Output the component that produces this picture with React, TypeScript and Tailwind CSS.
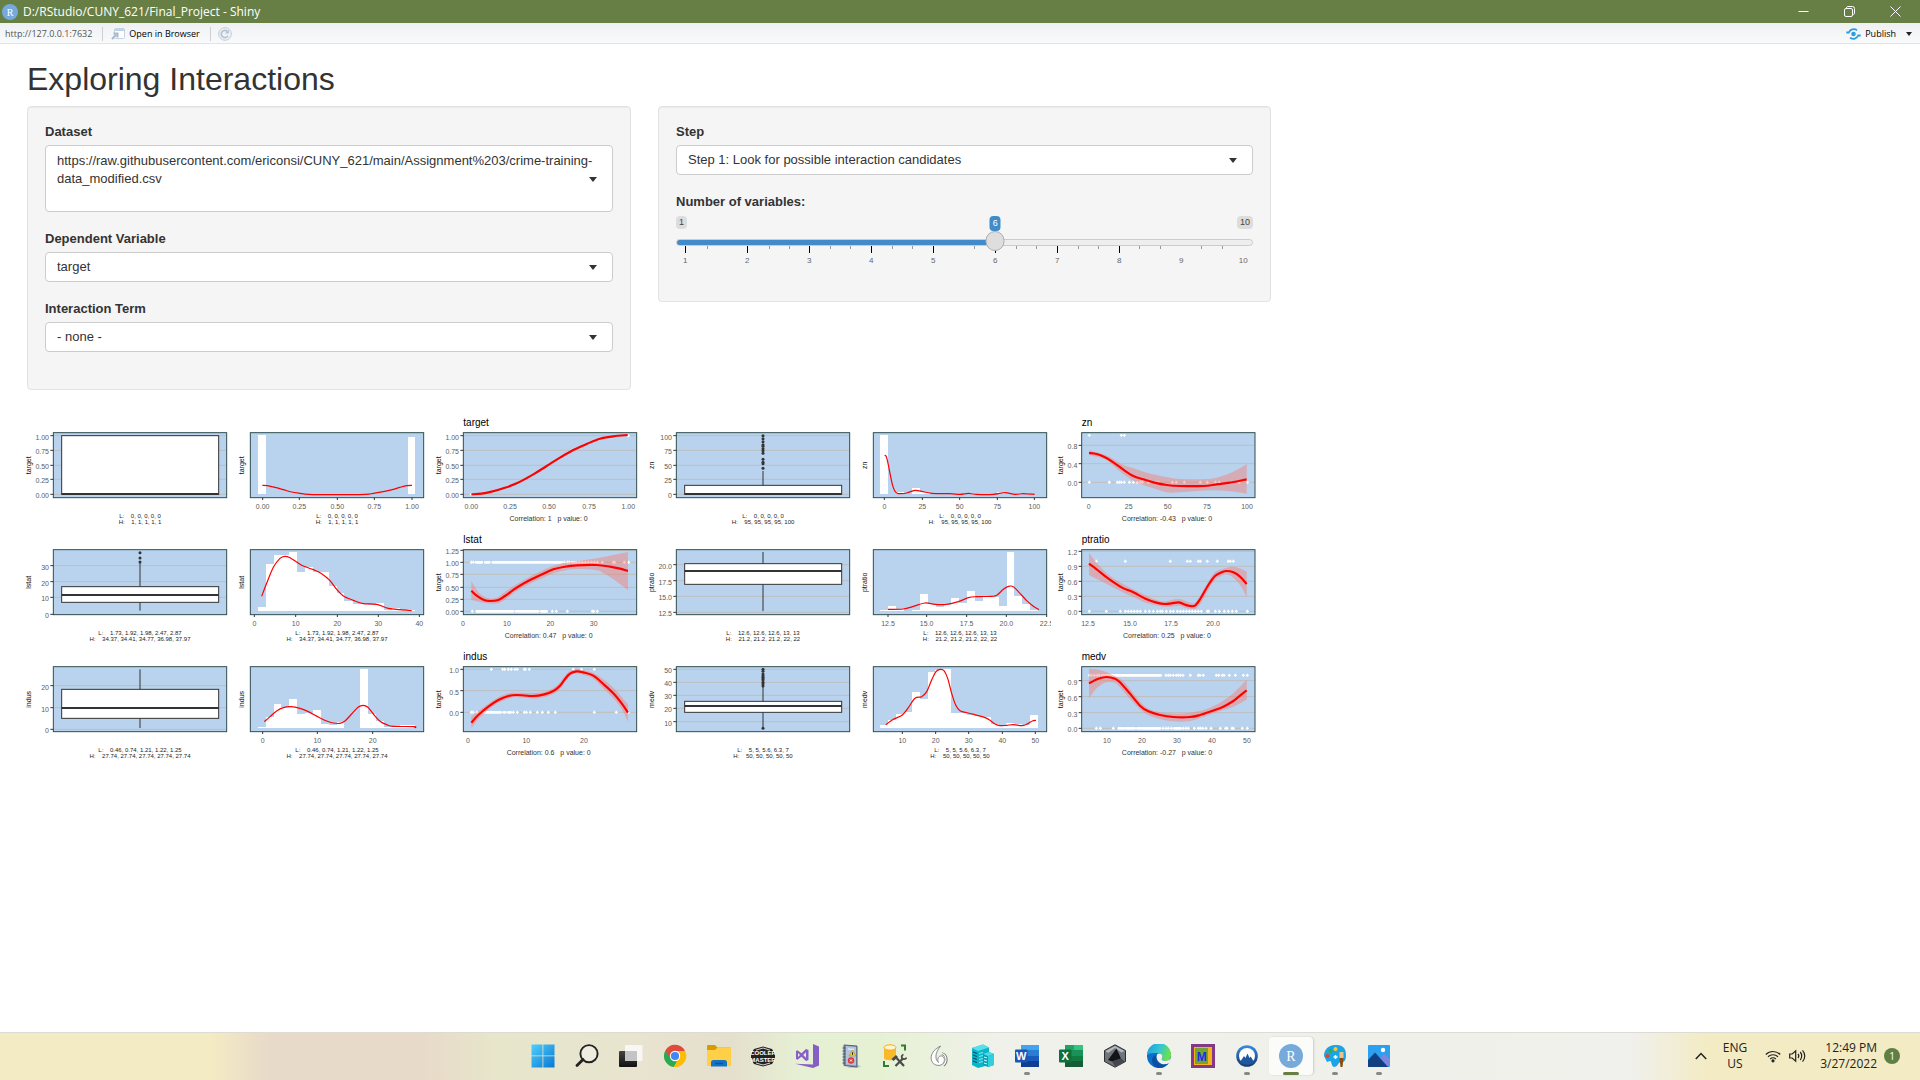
import { useState, type ReactNode } from 'react'

/* ---------- plots: every drawing unit is a third of a pixel ---------- */

type Tick = [number, string]
type Pt = [number, number]

const pts = (s: string): Pt[] =>
  s.split(' ').map((p) => p.split(',').map(Number) as Pt)

function smooth(p: Pt[], start = 'M') {
  let d = `${start}${p[0][0]},${p[0][1]}`
  for (let i = 0; i < p.length - 1; i++) {
    const a = p[i - 1] || p[i]
    const b = p[i]
    const c = p[i + 1]
    const e = p[i + 2] || c
    d += `C${b[0] + (c[0] - a[0]) / 6},${b[1] + (c[1] - a[1]) / 6} ${c[0] - (e[0] - b[0]) / 6},${c[1] - (e[1] - b[1]) / 6} ${c[0]},${c[1]}`
  }
  return d
}

const FONT = '"Liberation Sans", Arial, sans-serif'

type FrameProps = {
  row: number
  x0: number
  width: number
  left: number
  name: string
  nameX: number
  title?: string
  caption: string[]
  yTicks?: Tick[]
  xTicks?: Tick[]
  marks?: boolean
  children: ReactNode
}

function Frame({ row, x0, width, left, name, nameX, title, caption, yTicks = [], xTicks = [], marks, children }: FrameProps) {
  const top = 83 + row * 351
  const right = left + 520
  const bottom = top + 195
  const mid = left + 260
  return (
    <svg width={width} height={117} viewBox={`${x0} ${21 + row * 351} ${width * 3} 351`} className="block shrink-0" fontFamily={FONT} role="img" aria-label={`${name} plot`}>
      <rect x={left} y={top} width={520} height={195} fill="#b9d3ee" />
      {yTicks.map(([y]) => (
        <path key={y} d={`M${left} ${y}H${right}`} stroke="#bebebe" strokeWidth="3" />
      ))}
      {children}
      <rect x={left} y={top} width={520} height={195} fill="none" stroke="#2f4f4f" strokeWidth="3" />
      {yTicks.map(([y, t]) => (
        <g key={t}>
          <path d={`M${left - 9} ${y}H${left}`} stroke="#333" strokeWidth="3" />
          <text x={left - 13} y={y + 12} fontSize="21" textAnchor="end" fill="#5c5c5c">{t}</text>
        </g>
      ))}
      {xTicks.map(([x, t]) => (
        <g key={t}>
          {marks && <path d={`M${x} ${bottom}V${bottom + 7}`} stroke="#333" strokeWidth="3" />}
          <text x={x} y={bottom + 34} fontSize="21" textAnchor="middle" fill="#5c5c5c">{t}</text>
        </g>
      ))}
      <text transform={`translate(${nameX + 6} ${top + 98}) rotate(-90)`} fontSize="21" textAnchor="middle" fill="#111">{name}</text>
      {title && <text x={left} y={top - 19} fontSize="30" fill="#000">{title}</text>}
      {caption.length === 1 ? (
        <text x={mid - 4} y={top + 265} fontSize="21" textAnchor="middle" fill="#333" className="whitespace-pre">{caption[0]}</text>
      ) : (
        caption.map((c, i) => (
          <text key={i} x={mid} y={top + 256 + i * 19} fontSize="18" textAnchor="middle" fill="#222" className="whitespace-pre">{c}</text>
        ))
      )}
    </svg>
  )
}

type Box = { ticks: Tick[]; q: [number, number, number]; lo: number; hi: number; out?: number[] }

function BoxPlot({ b, left, ...f }: { b: Box } & Omit<FrameProps, 'children'>) {
  const cx = left + 260
  return (
    <Frame {...f} left={left} yTicks={b.ticks}>
      <path d={`M${cx} ${b.hi}V${b.lo}`} stroke="#333" strokeWidth="3" />
      <rect x={left + 25} y={b.q[0]} width={471} height={b.q[2] - b.q[0]} fill="#fff" stroke="#333" strokeWidth="3" />
      <path d={`M${left + 25} ${b.q[1]}h471`} stroke="#333" strokeWidth="6" />
      {b.out?.map((y) => <circle key={y} cx={cx} cy={y} r="4.5" fill="#333" />)}
    </Frame>
  )
}

type Hist = { base: number; bars: [number, number, number][]; line: string; ticks: Tick[] }

function Histogram({ h, ...f }: { h: Hist } & Omit<FrameProps, 'children'>) {
  return (
    <Frame {...f} xTicks={h.ticks} marks>
      {h.bars.map(([a, b, y]) => (
        <rect key={a} x={a} y={y} width={b - a} height={h.base - y} fill="#fff" shapeRendering="crispEdges" />
      ))}
      <path d={smooth(pts(h.line))} fill="none" stroke="#f00" strokeWidth="3.6" />
    </Frame>
  )
}

type Scatter = { y: Tick[]; x: Tick[]; line: string; up?: string; down?: string; dots: [number, number[]][]; runs?: [number, number, number][] }

function Fit({ s, ...f }: { s: Scatter } & Omit<FrameProps, 'children'>) {
  return (
    <Frame {...f} yTicks={s.y} xTicks={s.x}>
      {s.runs?.map(([y, a, b]) => <path key={`${y}-${a}`} d={`M${a} ${y}H${b}`} stroke="#fff" strokeWidth="8" strokeLinecap="round" />)}
      {s.dots.map(([y, xs]) => xs.map((x) => <path key={`${y}-${x}`} d={`M${x - 4.5} ${y}h9M${x} ${y - 4.5}v9`} stroke="#fff" strokeWidth="4" />))}
      {s.up && s.down && <path d={`${smooth(pts(s.up))}${smooth(pts(s.down), 'L')}Z`} fill="#ff7060" fillOpacity="0.4" />}
      <path d={smooth(pts(s.line))} fill="none" stroke="#f00" strokeWidth="6.5" />
    </Frame>
  )
}

const unitTicks: Tick[] = [[92, '1.00'], [136, '0.75'], [181, '0.50'], [223, '0.25'], [268, '0.00']]

const boxA: Box[] = [
  { ticks: unitTicks, q: [92, 267, 268], lo: 268, hi: 92 },
  { ticks: [[482, '30'], [530, '20'], [577, '10'], [628, '0']], q: [545, 570, 592], lo: 617, hi: 471, out: [443, 459, 471] },
  { ticks: [[842, '20'], [908, '10'], [973, '0']], q: [853, 909, 940], lo: 969, hi: 793 },
]

const boxB: Box[] = [
  { ticks: [[92, '100'], [136, '75'], [181, '50'], [223, '25'], [268, '0']], q: [241, 267, 268], lo: 268, hi: 198, out: [92, 101, 110, 119, 124, 131, 137, 145, 163, 172, 176, 190] },
  { ticks: [[479, '20.0'], [527, '17.5'], [574, '15.0'], [622, '12.5']], q: [476, 498, 538], lo: 618, hi: 441 },
  { ticks: [[793, '50'], [832, '40'], [871, '30'], [910, '20'], [950, '10']], q: [889, 903, 922], lo: 970, hi: 845, out: [793, 799, 807, 812, 817, 821, 825, 832, 837, 843, 970] },
]

const histA: Hist[] = [
  {
    base: 267,
    bars: [[774, 798, 90], [1224, 1245, 96]],
    line: '787,241 802,242 825,247 850,254 875,261 900,265 925,268 1000,269 1095,268 1120,265 1150,260 1180,253 1200,247 1220,242 1236,241',
    ticks: [[788, '0.00'], [898, '0.25'], [1012, '0.50'], [1123, '0.75'], [1236, '1.00']],
  },
  {
    base: 618,
    bars: [[774, 798, 606], [798, 822, 477], [822, 867, 450], [867, 891, 441], [891, 915, 501], [915, 939, 486], [939, 987, 501], [987, 1012, 543], [1012, 1032, 563], [1032, 1060, 587], [1060, 1104, 596], [1104, 1128, 600], [1128, 1152, 594], [1152, 1176, 614], [1176, 1200, 609], [1200, 1245, 614]],
    line: '785,574 800,535 820,487 840,460 855,454 870,458 890,471 910,483 940,494 965,506 990,527 1010,553 1030,573 1060,586 1090,596 1130,598 1165,610 1200,614 1235,617',
    ticks: [[763, '0'], [887, '10'], [1012, '20'], [1135, '30'], [1258, '40']],
  },
  {
    base: 969,
    bars: [[774, 798, 966], [798, 822, 936], [822, 843, 897], [843, 867, 906], [867, 891, 882], [891, 915, 927], [915, 939, 924], [939, 963, 915], [963, 987, 957], [987, 1011, 960], [1011, 1032, 951], [1080, 1104, 792], [1104, 1128, 927], [1128, 1152, 948], [1152, 1200, 966], [1200, 1245, 960]],
    line: '793,950 810,935 830,918 850,908 873,905 900,910 925,920 955,936 980,948 1000,954 1020,955 1035,948 1055,927 1075,906 1089,901 1103,906 1120,927 1140,949 1160,959 1180,964 1243,965 1243,969',
    ticks: [[788, '0'], [952, '10'], [1118, '20']],
  },
]

const histB: Hist[] = [
  {
    base: 267,
    bars: [[60, 84, 90], [108, 132, 262], [156, 180, 249], [180, 205, 261], [205, 228, 264], [312, 340, 264], [412, 436, 261], [480, 510, 264]],
    line: '74,151 79,155 84,175 90,205 97,238 104,257 112,265 125,266 140,264 165,256 185,259 215,265 270,266 300,268 325,265 350,268 400,268 435,263 465,268 490,266 524,268',
    ticks: [[73, '0'], [187, '25'], [299, '50'], [412, '75'], [523, '100']],
  },
  {
    base: 618,
    bars: [[60, 84, 614], [84, 108, 603], [108, 132, 612], [156, 180, 614], [180, 204, 567], [204, 228, 597], [228, 252, 606], [252, 273, 600], [273, 297, 579], [297, 321, 594], [321, 345, 558], [345, 369, 588], [369, 417, 576], [417, 441, 603], [441, 462, 441], [462, 486, 573], [486, 510, 597], [510, 534, 614]],
    line: '84,613 130,612 160,604 195,594 225,598 260,598 295,590 325,578 350,575 395,574 410,571 430,553 445,544 460,545 480,565 500,587 520,604 537,614',
    ticks: [[84, '12.5'], [200, '15.0'], [320, '17.5'], [439, '20.0'], [560, '22.5']],
  },
  {
    base: 969,
    bars: [[60, 84, 960], [84, 108, 945], [108, 132, 927], [132, 156, 921], [156, 180, 861], [180, 204, 882], [204, 225, 801], [225, 249, 795], [249, 273, 792], [273, 321, 924], [321, 345, 929], [345, 369, 932], [369, 393, 936], [393, 417, 958], [417, 437, 962], [437, 462, 954], [462, 486, 957], [486, 510, 960], [510, 534, 930]],
    line: '77,959 100,943 127,930 145,908 165,880 185,875 200,860 215,825 228,800 240,793 252,797 263,820 275,865 287,900 300,917 325,924 355,932 375,938 390,946 405,957 420,962 440,961 460,959 487,962 505,955 517,948 528,946',
    ticks: [[127, '10'], [227, '20'], [326, '30'], [427, '40'], [526, '50']],
  },
]

const fitA: Scatter[] = [
  {
    y: unitTicks,
    x: [[124, '0.00'], [240, '0.25'], [357, '0.50'], [477, '0.75'], [595, '1.00']],
    line: '124,268 155,266 185,260 220,250 260,235 310,208 350,183 390,158 430,135 470,117 510,101 550,94 593,90',
    dots: [[268, [124]], [92, [595]]],
  },
  {
    y: [[436, '1.25'], [472, '1.00'], [508, '0.75'], [547, '0.50'], [583, '0.25'], [619, '0.00']],
    x: [[99, '0'], [231, '10'], [361, '20'], [491, '30']],
    line: '124,557 140,572 160,584 180,588 205,585 225,573 260,548 300,525 340,506 370,493 400,486 440,481 500,480 540,485 570,491 594,498',
    up: '124,527 145,561 165,576 185,581 205,576 225,561 260,538 300,515 340,495 370,483 400,474 450,467 500,460 550,450 594,441',
    down: '594,555 570,537 540,516 520,505 500,496 440,492 400,497 370,505 340,518 300,536 260,558 225,584 205,595 185,596 165,594 145,590 124,584',
    dots: [[472, [124, 130, 403, 412, 418, 448, 457, 466, 475, 484, 493, 502, 517, 550, 554, 583, 596]], [619, [127, 367, 379, 412, 487, 491, 502]]],
    runs: [[472, 138, 156], [472, 166, 178], [472, 188, 395], [472, 426, 440], [619, 140, 250], [619, 258, 325], [619, 334, 350]],
  },
  {
    y: [[793, '1.0'], [857, '0.5'], [922, '0.0']],
    x: [[114, '0'], [289, '10'], [462, '20']],
    line: '124,953 145,930 175,905 205,885 235,873 260,870 310,873 340,869 370,858 390,842 405,822 420,806 440,799 460,802 490,812 520,837 550,865 575,895 594,923',
    up: '124,935 145,918 175,896 205,877 235,865 260,863 310,864 340,862 370,849 390,832 405,812 420,798 440,793 460,795 490,804 520,823 550,848 575,876 594,899',
    down: '594,950 575,912 550,880 520,850 490,821 460,810 440,805 420,814 405,832 390,852 370,867 340,877 310,881 260,877 235,881 205,893 175,914 145,942 124,970',
    dots: [[793, [184, 218, 224, 235, 244, 255, 262, 283, 286, 298, 430, 454, 493]], [922, [124, 129, 141, 154, 163, 250, 262, 283, 289, 301, 322, 337, 355, 376, 493, 559, 595]]],
    runs: [[922, 168, 212], [922, 221, 226], [922, 235, 242]],
  },
]

const fitB: Scatter[] = [
  {
    y: [[121, '0.8'], [176, '0.4'], [232, '0.0']],
    x: [[686, '0'], [806, '25'], [923, '50'], [1041, '75'], [1161, '100']],
    line: '687,144 710,147 735,157 760,172 790,194 820,213 850,223 880,232 920,240 960,243 1030,243 1070,238 1110,233 1160,223',
    up: '687,136 735,150 760,162 790,180 820,190 860,203 920,216 960,222 1040,222 1080,215 1110,205 1140,190 1160,178',
    down: '1160,266 1110,259 1060,256 1010,258 960,262 920,262 880,250 850,240 820,227 790,207 760,182 735,163 687,150',
    dots: [[91, [688, 784, 793]], [232, [688, 748, 772, 778, 784, 793, 808, 820, 832, 841, 847, 865, 887, 895, 937, 949, 973, 1021, 1042, 1066, 1078, 1114, 1137, 1162]]],
  },
  {
    y: [[439, '1.2'], [484, '0.9'], [529, '0.6'], [574, '0.3'], [619, '0.0']],
    x: [[684, '12.5'], [810, '15.0'], [933, '17.5'], [1059, '20.0']],
    line: '687,476 710,493 740,517 785,547 820,562 860,583 890,593 915,597 935,595 957,592 975,599 990,603 1005,602 1020,583 1045,540 1065,513 1085,502 1100,498 1120,502 1140,515 1160,537',
    up: '687,443 705,467 730,495 760,520 800,543 860,573 890,585 915,589 957,582 990,593 1005,593 1020,573 1045,530 1065,502 1085,493 1110,486 1130,487 1160,500',
    down: '1160,575 1140,540 1120,518 1100,508 1085,512 1065,524 1045,555 1020,598 1005,612 975,608 957,602 915,605 860,594 820,576 785,560 740,537 710,522 687,510',
    dots: [[469, [709, 796, 931, 982, 991, 1015, 1021, 1042, 1072, 1105, 1111, 1120]], [619, [688, 739, 781, 796, 805, 814, 823, 832, 841, 856, 868, 880, 892, 901, 907, 919, 931, 940, 952, 961, 970, 979, 988, 997, 1006, 1015, 1024, 1042, 1046, 1066, 1078, 1093, 1105, 1117, 1129, 1162]]],
  },
  {
    y: [[827, '0.9'], [875, '0.6'], [923, '0.3'], [970, '0.0']],
    x: [[741, '10'], [846, '20'], [951, '30'], [1056, '40'], [1161, '50']],
    line: '687,835 715,821 740,816 765,821 780,832 810,866 840,902 865,919 900,930 940,936 990,936 1020,930 1055,918 1090,905 1120,888 1140,872 1160,856',
    up: '687,791 710,793 740,802 765,814 790,829 820,865 850,900 880,917 940,926 990,923 1040,912 1080,893 1110,873 1140,845 1160,824',
    down: '1160,884 1120,905 1080,918 1040,932 990,948 940,949 900,942 865,930 840,913 810,882 780,847 765,833 740,832 720,842 705,855 687,880',
    dots: [[811, [688, 694, 703, 712, 718, 918, 925, 931, 940, 949, 955, 961, 969, 991, 1015, 1020, 1030, 1069, 1076, 1087, 1092, 1108, 1126, 1150, 1162]], [970, [709, 721, 760, 909, 918, 925, 934, 970, 978, 985, 1003, 1015, 1021, 1028, 1038, 1053, 1081, 1097, 1101, 1116, 1120, 1147, 1162]]],
    runs: [[811, 726, 902], [970, 776, 792], [970, 798, 824], [970, 832, 900], [970, 942, 962]],
  },
]

const groupA = [
  { name: 'target', caption: ['L:    0, 0, 0, 0, 0', 'H:    1, 1, 1, 1, 1'], corr: 'Correlation: 1   p value: 0' },
  { name: 'lstat', caption: ['L:    1.73, 1.92, 1.98, 2.47, 2.87', 'H:    34.37, 34.41, 34.77, 36.98, 37.97'], corr: 'Correlation: 0.47   p value: 0' },
  { name: 'indus', caption: ['L:    0.46, 0.74, 1.21, 1.22, 1.25', 'H:    27.74, 27.74, 27.74, 27.74, 27.74'], corr: 'Correlation: 0.6   p value: 0' },
]

const groupB = [
  { name: 'zn', caption: ['L:    0, 0, 0, 0, 0', 'H:    95, 95, 95, 95, 100'], corr: 'Correlation: -0.43   p value: 0' },
  { name: 'ptratio', caption: ['L:    12.6, 12.6, 12.6, 13, 13', 'H:    21.2, 21.2, 21.2, 22, 22'], corr: 'Correlation: 0.25   p value: 0' },
  { name: 'medv', caption: ['L:    5, 5, 5.6, 6.3, 7', 'H:    50, 50, 50, 50, 50'], corr: 'Correlation: -0.27   p value: 0' },
]

function Plots() {
  return (
    <section aria-label="Interaction plots" className="mt-[22px] flex flex-col pl-[23px]">
      {[0, 1, 2].map((r) => {
        const a = groupA[r]
        const b = groupB[r]
        return (
          <div key={r} className="flex">
            <BoxPlot b={boxA[r]} row={r} x0={69} width={209} left={160} nameX={87} name={a.name} caption={a.caption} />
            <Histogram h={histA[r]} row={r} x0={696} width={198} left={751} nameX={725} name={a.name} caption={a.caption} />
            <Fit s={fitA[r]} row={r} x0={0} width={213} left={100} nameX={27} name="target" title={a.name} caption={[a.corr]} />
            <BoxPlot b={boxB[r]} row={r} x0={639} width={211} left={739} nameX={666} name={b.name} caption={b.caption} />
            <Histogram h={histB[r]} row={r} x0={-18} width={197} left={40} nameX={14} name={b.name} caption={b.caption} />
            <Fit s={fitB[r]} row={r} x0={573} width={211} left={665} nameX={604} name="target" title={b.name} caption={[b.corr]} />
          </div>
        )
      })}
    </section>
  )
}

/* ---------- input panels ---------- */

function Caret() {
  return <span className="pointer-events-none absolute top-1/2 right-4 -mt-0.5 border-x-4 border-t-5 border-x-transparent border-t-[#333]" />
}

function Pick({ id, label, value }: { id: string; label: string; value: string }) {
  return (
    <div>
      <label htmlFor={id} className="mb-1 block leading-[18px] font-bold">{label}</label>
      <div className="relative">
        <select id={id} className="block h-[30px] w-full appearance-none rounded border border-[#ccc] bg-white pr-8 pl-[11px] text-[#333]">
          <option>{value}</option>
        </select>
        <Caret />
      </div>
    </div>
  )
}

const panelCls = 'rounded border border-[#e3e3e3] bg-[#f5f5f5] px-[17px] pt-4 pb-[37px] shadow-[inset_0_1px_1px_rgba(0,0,0,0.05)] flex flex-col gap-[18px]'

const MINOR = [163, 315, 364, 466, 515, 618, 667, 819, 920, 971, 1072, 1123, 1223, 1274, 1375, 1426]

function Slider() {
  const [n, setN] = useState(6)
  const at = (v: number) => `${1.6 + ((v - 1) / 9) * 96.7}%`
  return (
    <div>
      <label htmlFor="nvars" className="mb-[5px] block leading-[18px] font-bold">Number of variables:</label>
      <div className="relative h-12 text-[9px]">
        <div className="flex justify-between leading-[13px]">
          <span className="rounded-sm bg-[#ddd] px-[3px] text-[#444]">1</span>
          <span className="rounded-sm bg-[#ddd] px-[3px] text-[#444]">10</span>
        </div>
        <span className="absolute top-0 h-[15px] -translate-x-1/2 rounded-sm bg-[#428bca] px-[3px] leading-[15px] text-white" style={{ left: at(n) }}>{n}</span>
        <div className="mt-[10px] h-[7px] overflow-hidden rounded-md border border-[#ccc] bg-[#eee]">
          <div className="-m-px h-[7px] bg-[#428bca]" style={{ width: at(n) }} />
        </div>
        {[1, 2, 3, 4, 5, 6, 7, 8].map((v) => (
          <i key={v} className="absolute top-[30px] h-[7px] w-px bg-black" style={{ left: at(v) }} />
        ))}
        {MINOR.map((m) => (
          <i key={m} className="absolute top-[30px] h-[3px] w-px bg-[#999]" style={{ left: `${((m - 88) / 1414) * 100}%` }} />
        ))}
        <span className="absolute top-[15px] h-5 w-[19px] -translate-x-1/2 rounded-full border border-[#ababab] bg-[#dedede]" style={{ left: at(n) }} />
        {[1, 2, 3, 4, 5, 6, 7, 8, 9, 10].map((v) => (
          <span key={v} className="absolute top-10 -translate-x-1/2 text-[8px] leading-[10px] text-[#666]" style={{ left: at(v) }}>{v}</span>
        ))}
        <input id="nvars" type="range" min={1} max={10} value={n} onChange={(e) => setN(Number(e.target.value))} className="absolute inset-x-0 top-[14px] h-5 w-full cursor-pointer opacity-0" />
      </div>
    </div>
  )
}

/* ---------- taskbar icons, 24 x 24 ---------- */

const I = ({ children }: { children: ReactNode }) => (
  <svg width="24" height="24" viewBox="0 0 24 24" aria-hidden="true">{children}</svg>
)

const icons: { name: string; dot?: boolean; active?: boolean; art: ReactNode }[] = [
  {
    name: 'Start',
    art: (
      <I>
        <defs><linearGradient id="win" x1="0" y1="0" x2="1" y2="1" gradientUnits="objectBoundingBox"><stop stopColor="#4fd0fc" /><stop offset="1" stopColor="#0a76d4" /></linearGradient></defs>
        <path fill="url(#win)" d="M.5 .5h11v11H.5zM12.3 .5h11.2v11H12.3zM.5 12.3h11v11.2H.5zM12.3 12.3h11.2v11.2H12.3z" />
      </I>
    ),
  },
  {
    name: 'Search',
    art: <I><circle cx="14" cy="9.7" r="8.6" fill="#f2f2ea" fillOpacity=".6" stroke="#222" strokeWidth="1.9" /><path d="M8 15.6 2 21.6" stroke="#222" strokeWidth="2.8" strokeLinecap="round" /></I>,
  },
  {
    name: 'Task view',
    art: (
      <I>
        <defs><linearGradient id="tv" x1="0" y1="0" x2="0" y2="1"><stop stopColor="#444" /><stop offset="1" stopColor="#111" /></linearGradient></defs>
        <rect y="7" width="18" height="16" rx="1" fill="url(#tv)" /><rect x="6" y="1" width="17.5" height="16" rx="1" fill="#f7f7f7" /><rect x="6" y="7" width="12" height="10" fill="#c4c4c4" />
      </I>
    ),
  },
  {
    name: 'Chrome',
    art: (
      <I>
        <path d="M12 12 2.4 6.5A11 11 0 0 0 11 23l5-9z" fill="#2da94f" /><path d="M12 12h9.6a11 11 0 0 1-10.6 11l5-9z" fill="#fdbd00" /><path d="M22 7a11 11 0 0 1-11 16l5-9-1-7z" fill="#fdbd00" /><path d="M2.4 6.5A11 11 0 0 1 22 7H12l-5 7z" fill="#e04a3a" /><circle cx="12" cy="12" r="5.2" fill="#fff" /><circle cx="12" cy="12" r="4.1" fill="#4285f4" />
      </I>
    ),
  },
  {
    name: 'File Explorer',
    art: (
      <I>
        <path d="M0 2a1 1 0 0 1 1-1h7l2.5 2.5H23a1 1 0 0 1 1 1V10H0z" fill="#d99a00" /><path d="M0 6h8l2.5-2.5H23a1 1 0 0 1 1 1V22H0z" fill="#ffcf48" /><path d="M4 22.500v-4a2.500 2.500 0 0 1 2.500-2.500h11a2.500 2.500 0 0 1 2.500 2.500v4z" fill="#1373c4" /><path d="M8 19.500h8" stroke="#0b559c" strokeWidth="1.500" />
      </I>
    ),
  },
  {
    name: 'Cooler Master',
    art: (
      <I>
        <path d="M12 2.500 21 5l3 5v5l-3 5-9 2.500L3 20l-3-5v-5l3-5z" fill="#222" />
        <g fill="#fff" fontFamily={FONT} fontWeight="700" textAnchor="middle" fontSize="6"><text x="12" y="11">COOLER</text><text x="12" y="17.500">MASTER</text></g>
        <path d="M5 6.200 12 4l7 2.200M5 19l7 2 7-2" fill="none" stroke="#fff" strokeWidth=".8" />
      </I>
    ),
  },
  {
    name: 'Visual Studio',
    art: <I><path d="m18 0 6 2.500v19L18 24 0 19.800l18 .8z" fill="#865fc5" /><path d="m1 7 1.500-.7L6.500 9.200 11 5l2.500 1v10L11 17l-4.500-4.200-4 2.900L1 15zM3 9v4L5 11zM11 8.300 8.200 11l2.800 2.800z" fill="#8660c8" fillRule="evenodd" /></I>,
  },
  {
    name: 'ODBC Data Sources',
    art: (
      <I>
        <path d="M15 21h5l2 1.500-3 1.500H8z" fill="#999" opacity=".4" /><path d="m5 1 13 1v21L5 21.500z" fill="#7f92b4" stroke="#55617c" /><path d="m7 2 10 1v18.500L7 20.500z" fill="#b4c3dc" /><path d="M9 5l6 .5" stroke="#dfe7f3" strokeWidth="1.500" /><path d="M3.500 4h3M3.500 7h3M3.500 10h3M3.500 13h3M3.500 16h3M3.500 19h3" stroke="#555" strokeWidth="1.200" /><path d="m13.500 6 3.500 6h-7z" fill="#f5cf1d" stroke="#a88a00" strokeWidth=".5" /><path d="M13.500 8.300v2.500" stroke="#222" /><circle cx="12" cy="16.500" r="3.200" fill="#d93a3a" /><path d="m10.900 15.400 2.200 2.200m0-2.200-2.200 2.200" stroke="#fff" />
      </I>
    ),
  },
  {
    name: 'Database tools',
    art: (
      <I>
        <path d="M1 3.500V14c0 3 12 3 12 0V3.500z" fill="#f8b92b" /><ellipse cx="7" cy="3.500" rx="6" ry="2.700" fill="#fff3cf" stroke="#f5ad14" /><path d="M18 1.500h4v5M1 17v5h5" fill="none" stroke="#2d7d32" strokeWidth="2" />
        <path d="m13.500 14 7.500 8M20 14.500 12.500 22" stroke="#4a4a4a" strokeWidth="2.200" /><path d="m9.500 16 4.500-4" stroke="#4a4a4a" strokeWidth="3" /><path d="M20.500 10.500a2.500 2.500 0 0 0-1.500 3.500 2.500 2.500 0 0 0 4.500-.5" fill="none" stroke="#4a4a4a" strokeWidth="1.800" />
      </I>
    ),
  },
  {
    name: 'Dragon',
    art: (
      <I>
        <path d="M13.500 2C6 6 3 11 4.500 16.500 6 22 14 23 16.500 19c2-3.300.5-7.500-3-7-2.500.5-3.500 3.500-2 6.500-3.500-3-4-9 2-16.500z" fill="#fff" stroke="#8a8a8a" strokeWidth="1" /><path d="M15 9.500c5 1.500 6 8 1.500 12" fill="none" stroke="#777" strokeWidth="2.400" /><path d="M15 9.500c4.600 1.500 5.500 8 1.200 11.800" fill="none" stroke="#fff" strokeWidth="1.200" />
      </I>
    ),
  },
  {
    name: 'Azure Data',
    art: (
      <I>
        <path d="m1 4 11-3.500 6 3V21L7 24l-6-3z" fill="#0cb4c8" /><path d="m1 4 11-3.500 6 3L7 7z" fill="#55e0ee" /><path d="M2 8l4 1.500M2 11l4 1.500M2 14l4 1.500M2 17l4 1.500" stroke="#064e5c" strokeWidth="1.300" /><path d="M8 9.500l4-1M8 12.500l4-1M8 15.500l4-1M8 18.500l4-1" stroke="#7deaf4" strokeWidth="1.100" /><path d="m12 10 6-2 5 2v11l-6 2-5-2z" fill="#07a0b6" /><path d="m12 10 6-2 5 2-6 2z" fill="#4fdcea" /><path d="M17 12l6-2v11l-6 2z" fill="#2fcfe0" /><path d="m13 13 3 1m-3 2 3 1m-3 2 3 1" stroke="#d8fbff" />
      </I>
    ),
  },
  {
    name: 'Word',
    dot: true,
    art: (
      <I>
        <rect x="6" y="1" width="18" height="6" fill="#41a5ee" /><rect x="6" y="6" width="18" height="6" fill="#2b7cd3" /><rect x="6" y="12" width="18" height="5.500" fill="#185abd" /><rect x="6" y="17" width="18" height="6" fill="#103f91" /><rect y="5.500" width="12.500" height="13" rx="1" fill="#1a56b4" /><text x="6.200" y="16" fontSize="11" fontWeight="700" textAnchor="middle" fill="#fff" fontFamily={FONT}>W</text>
      </I>
    ),
  },
  {
    name: 'Excel',
    art: (
      <I>
        <rect x="6" y="1" width="18" height="6" fill="#21a366" /><rect x="15" y="1" width="9" height="6" fill="#33c481" /><rect x="6" y="6" width="18" height="6" fill="#1a9158" /><rect x="6" y="12" width="18" height="5.500" fill="#107c41" /><rect x="6" y="17" width="18" height="6" fill="#185c37" /><rect y="5.500" width="12.500" height="13" rx="1" fill="#10703c" /><text x="6.200" y="16" fontSize="11" fontWeight="700" textAnchor="middle" fill="#fff" fontFamily={FONT}>X</text>
      </I>
    ),
  },
  {
    name: 'Hexagon viewer',
    art: <I><path d="m12 .8 10.500 5.700v11L12 23.200 1.500 17.500v-11z" fill="#70757b" stroke="#2b2e33" /><path d="m12 2 9.500 5-3 1.500L12 4 5 9 2.500 7z" fill="#b5babf" /><path d="m13.500 4.500 4.500 10-9 3-4-1.500z" fill="#121417" /><path d="m18 14.500 4 3-10 5-3-5z" fill="#44484e" /></I>,
  },
  {
    name: 'Edge',
    dot: true,
    art: (
      <I>
        <defs><linearGradient id="edge" x1="0" y1="0" x2="1" y2=".3"><stop stopColor="#1b9de2" /><stop offset=".6" stopColor="#35c7d0" /><stop offset="1" stopColor="#6be04e" /></linearGradient></defs>
        <circle cx="12" cy="12" r="12" fill="#0c6fc8" /><path d="M0 11A12 12 0 0 1 24 11c0 4-3 6-6 6s-4-1.500-3-3c1.500-2.500-1-5-4-5-5 0-9 0-11 2z" fill="url(#edge)" /><path d="M11.500 9.500c3 0 5 2 3.500 4.500-1 1.500 0 3 3 3 2.500 0 4.500-1 6-3-.3 2-1.200 4-2.300 5.300-2 1.200-4 1.500-6 .9C12 19.300 9.500 16 9.500 12.500c0-1.500.8-2.700 2-3z" fill="#f1f1ec" /><path d="M9.500 11C8 15 11 20.500 17 20.500c2 0 3.500-.5 4.700-1.200A12 12 0 0 1 12 24c-4.500-.5-7-4-7-7.500S6.500 11.500 9.500 11z" fill="#0b4fa0" />
      </I>
    ),
  },
  {
    name: 'M editor',
    art: <I><rect width="24" height="24" fill="#833a84" /><rect x="3" y="3" width="18" height="18" fill="#f8b01c" /><rect x="4" y="4" width="13" height="16" fill="#75a233" /><text x="10.800" y="16.500" fontSize="12" fontWeight="700" textAnchor="middle" fill="#1731e8" fontFamily={FONT}>M</text></I>,
  },
  {
    name: 'NordVPN',
    dot: true,
    art: (
      <I>
        <defs><linearGradient id="nord" x1="0" y1="0" x2="0" y2="1"><stop stopColor="#3a8be0" /><stop offset="1" stopColor="#123a70" /></linearGradient></defs>
        <circle cx="12" cy="12" r="10.800" fill="url(#nord)" /><circle cx="12" cy="12" r="8" fill="#fff" /><path d="m5 18 4-6 1.500 2 2-4.500 2 4.500 1.200-1.500L19 18c-3 3.500-11 3.500-14 0z" fill="#1f569c" />
      </I>
    ),
  },
  {
    name: 'RStudio',
    active: true,
    art: <I><circle cx="12" cy="12" r="12" fill="#75aadb" /><text x="12" y="16.500" fontSize="14" textAnchor="middle" fill="#fff" fontFamily='"Liberation Serif", serif'>R</text></I>,
  },
  {
    name: 'Paint',
    dot: true,
    art: (
      <I>
        <path d="M12 1C5 1 1 6 1 12l3 6 3-1c2 0 1 5 4 6 3 0 4-3 5-4 3-1.500 7 1 7-8S18 1 12 1z" fill="#1ba5e6" /><circle cx="12.500" cy="5" r="2" fill="#ffc928" /><circle cx="7.500" cy="7" r="2.100" fill="#3aa843" /><circle cx="4.500" cy="12" r="2.100" fill="#d9472f" /><path d="M12.500 11v4m-2-2h4" stroke="#fff" strokeWidth="1.500" /><path d="M16.500 8h4v6h-4z" fill="#e6c48a" /><path d="M16.500 14h4l-1 9h-2z" fill="#8a4b12" />
      </I>
    ),
  },
  {
    name: 'Photos',
    dot: true,
    art: <I><rect x="1" y="1" width="22" height="22" rx="1" fill="#2b9ff0" /><path d="m13 14 4-4.500 6 6V22h-8z" fill="#7a86e0" /><path d="M1 16 8 8.500 21 23H1z" fill="#123f80" /><circle cx="16" cy="6" r="2.200" fill="#fff" /></I>,
  },
]

function Taskbar() {
  return (
    <footer className="grid h-12 grid-cols-[1fr_auto_1fr] border-t border-[#dcdcd4] bg-[linear-gradient(90deg,#f3ebc3_0%,#f3ebc3_11%,#e8dac9_14%,#e8dac9_22%,#e7e6cb_26%,#e8e4cf_33%,#e5dfcd_38%,#e6f1d4_42%,#e6f1d4_46%,#f0f1ea_52%,#f0f0ec_85%,#f3ebc3_89%,#f3ebc3_100%)] pb-px font-['Open_Sans','Noto_Sans',sans-serif]">
      <div />
      <nav aria-label="Taskbar" className="flex pl-px">
        {icons.map((ic) => (
          <button key={ic.name} type="button" aria-label={ic.name} className={ic.active ? 'relative my-1 flex w-11 items-center justify-center rounded bg-white/70 shadow-[1px_0_2px_rgba(0,0,0,0.15)]' : 'relative my-1 flex w-11 items-center justify-center'}>
            {ic.art}
            {ic.dot && <span className="absolute bottom-0 h-[3px] w-1.5 rounded-full bg-[#888]" />}
            {ic.active && <span className="absolute bottom-0 h-[3px] w-4 rounded-full bg-[#677f45]" />}
          </button>
        ))}
      </nav>
      <div className="flex items-center justify-end pr-5 text-[12px] leading-4 text-[#222]">
        <button type="button" aria-label="Show hidden icons" className="mr-4">
          <svg width="12" height="8" viewBox="0 0 12 8" fill="none" stroke="#222" strokeWidth="1.5"><path d="m.8 7 5.200-5.500L11.200 7" /></svg>
        </button>
        <button type="button" className="mr-[18px] text-center">ENG<br />US</button>
        <svg className="mr-2" width="16" height="14" viewBox="0 0 16 14" fill="none" stroke="#222" strokeWidth="1.200"><path d="M.8 5.500a10.200 10.200 0 0 1 14.400 0M3 7.800a7.100 7.100 0 0 1 10 0M5.200 10a4 4 0 0 1 5.600 0" /><circle cx="8" cy="11.800" r="1" fill="#222" /></svg>
        <svg className="mr-[14px]" width="17" height="14" viewBox="0 0 17 14" fill="none" stroke="#222" strokeWidth="1.200"><path d="M.7 5v4h2.500l3.500 3.200V1.800L3.200 5zM9 5c1 1.200 1 2.800 0 4M11.200 3c2 2.200 2 5.800 0 8M13.500 1.300c3 3.200 3 8.200 0 11.400" /></svg>
        <button type="button" className="mr-[7px] text-right">12:49 PM<br />3/27/2022</button>
        <span className="flex size-4 items-center justify-center rounded-full bg-[#5f7f45] text-[10px] text-white">1</span>
      </div>
    </footer>
  )
}

/* ---------- window ---------- */

export default function App() {
  return (
    <div className="flex min-h-screen flex-col bg-white font-['Liberation_Sans',Arial,sans-serif] text-[13px] text-[#333]">
      <header className="flex h-[23px] items-center bg-[#677f45] pl-[2px] font-['Open_Sans','Noto_Sans',sans-serif] text-[12px] text-white">
        <svg width="16" height="16" viewBox="0 0 16 16" aria-hidden="true"><circle cx="8" cy="8" r="8" fill="#75aadb" /><text x="8" y="11.500" fontSize="10" textAnchor="middle" fill="#fff" fontFamily='"Liberation Serif", serif'>R</text></svg>
        <span className="ml-[5px]">D:/RStudio/CUNY_621/Final_Project - Shiny</span>
        <div className="ml-auto flex gap-[35px] pr-[19px]">
          <button type="button" aria-label="Minimize"><svg width="11" height="11" viewBox="0 0 11 11" stroke="#fff"><path d="M.5 5.500h10" /></svg></button>
          <button type="button" aria-label="Restore"><svg width="11" height="11" viewBox="0 0 11 11" fill="none" stroke="#fff"><rect x=".5" y="2.500" width="8" height="8" rx="1.500" /><path d="M2.500 2.500C2.500 1 3 .5 4 .5h4.500a2 2 0 0 1 2 2V7c0 1-.5 1.500-2 1.500" /></svg></button>
          <button type="button" aria-label="Close"><svg width="11" height="11" viewBox="0 0 11 11" stroke="#fff"><path d="m.5.5 10 10m0-10-10 10" /></svg></button>
        </div>
      </header>

      <div className="flex h-[21px] items-center border-b border-[#e1e4e6] bg-linear-to-b from-[#eef1f3] to-[#f9fafb] pt-0.5 pl-[5px] font-['Open_Sans','Noto_Sans',sans-serif] text-[9px] text-black">
        <span className="text-[#555]">http://127.0.0.1:7632</span>
        <span className="ml-[10px] h-[14px] w-px bg-[#ccd0d3]" />
        <button type="button" className="ml-2 flex items-center gap-1">
          <svg width="14" height="12" viewBox="0 0 14 12" aria-hidden="true"><rect x="3.500" y=".5" width="10" height="10" rx="1" fill="#fff" stroke="#c5d3e4" /><path d="M3.500 1h10v2h-10z" fill="#bcd3ec" /><path d="M1 11 5 7M2.500 5.500h4v4" fill="none" stroke="#a9b9cd" strokeWidth="2" /></svg>
          Open in Browser
        </button>
        <span className="ml-[10px] h-[14px] w-px bg-[#ccd0d3]" />
        <button type="button" aria-label="Reload" className="ml-[7px]">
          <svg width="14" height="14" viewBox="0 0 14 14" fill="none"><circle cx="7" cy="7" r="6.300" fill="#eef2f6" stroke="#c0cbd7" /><path d="M10 8.800A3.600 3.600 0 1 1 9.500 4.500" stroke="#b4c2d2" strokeWidth="1.600" /><path d="M10.800 2.500v4H7z" fill="#b4c2d2" /></svg>
        </button>
        <button type="button" className="ml-auto flex items-center gap-1 pr-2">
          <svg width="15" height="12" viewBox="0 0 15 12" fill="none" stroke="#2a9fe0" aria-hidden="true"><circle cx="7.500" cy="6" r="2.300" fill="#2a9fe0" stroke="none" /><path d="M.3 4.500h2.500C4 1.500 8 .2 11 2.200M14.700 7.500h-2.500C11 10.500 7 11.800 4 9.800" strokeWidth="1.800" /></svg>
          Publish
          <span className="ml-1.5 border-x-3 border-t-4 border-x-transparent border-t-[#222]" />
        </button>
      </div>

      <main className="flex-1">
        <h1 className="mt-[18px] mb-[9px] pl-[27px] text-[32px] leading-[35px]">Exploring Interactions</h1>
        <form className="grid grid-cols-[604fr_613fr_622fr] items-start gap-x-[27px] pl-[27px]">
          <div className={panelCls}>
            <div>
              <label htmlFor="dataset" className="mb-1 block leading-[18px] font-bold">Dataset</label>
              <div className="relative">
                <button id="dataset" type="button" aria-haspopup="listbox" className="flex h-[67px] w-full items-start rounded border border-[#ccc] bg-white px-[11px] pt-[6px] text-left leading-[18px]">
                  https://raw.githubusercontent.com/ericonsi/CUNY_621/main/Assignment%203/crime-training-<wbr />data_modified.csv
                </button>
                <Caret />
              </div>
            </div>
            <Pick id="dep" label="Dependent Variable" value="target" />
            <Pick id="term" label="Interaction Term" value="- none -" />
          </div>
          <div className={panelCls}>
            <Pick id="step" label="Step" value="Step 1: Look for possible interaction candidates" />
            <Slider />
          </div>
        </form>
        <Plots />
      </main>

      <Taskbar />
    </div>
  )
}
